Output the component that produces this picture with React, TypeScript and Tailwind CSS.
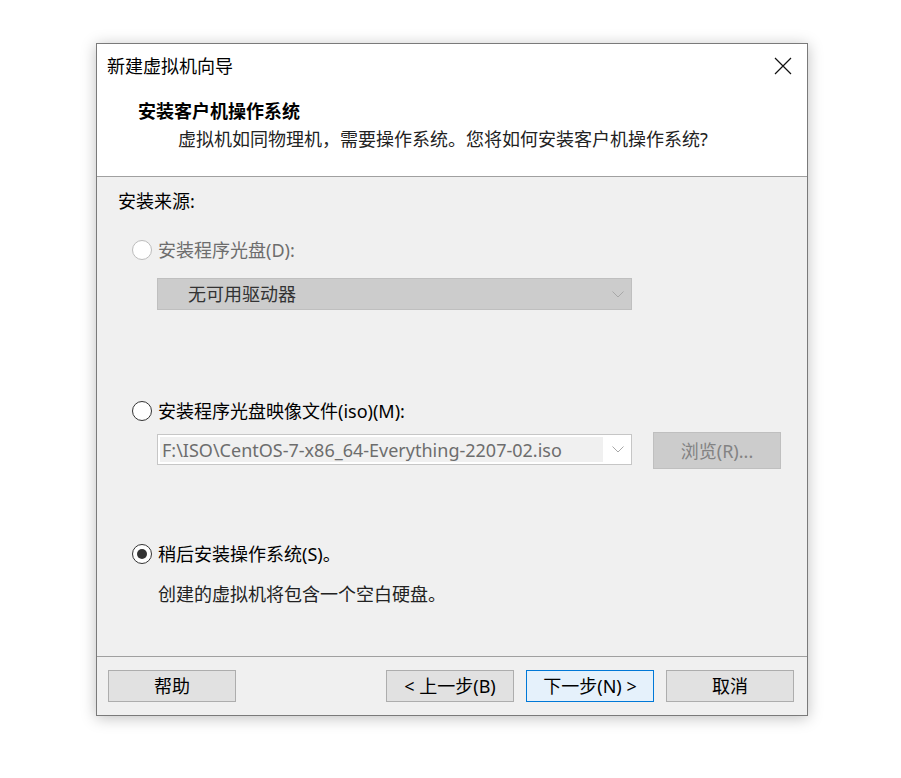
import React from "react";

function Radio({ checked, disabled }: { checked?: boolean; disabled?: boolean }) {
  return (
    <span
      className={`flex h-[20px] w-[20px] shrink-0 items-center justify-center rounded-full border bg-white ${
        disabled ? "border-[#bcbcbc]" : "border-[#333333]"
      }`}
    >
      {checked && <span className="h-[10px] w-[10px] rounded-full bg-[#333333]" />}
    </span>
  );
}

function Chevron({ color }: { color: string }) {
  return (
    <svg width="12" height="7" viewBox="0 0 12 7" fill="none">
      <polyline points="0.5,0.5 6,6 11.5,0.5" stroke={color} strokeWidth="1" />
    </svg>
  );
}

function Button({
  children,
  primary,
  className = "",
}: {
  children: React.ReactNode;
  primary?: boolean;
  className?: string;
}) {
  return (
    <button
      type="button"
      className={`flex h-[32px] w-[128px] items-center justify-center border text-[18px] text-black ${
        primary ? "border-[#0078d7] bg-[#e5f1fb]" : "border-[#adadad] bg-[#e1e1e1]"
      } ${className}`}
    >
      {children}
    </button>
  );
}

export default function App() {
  return (
    <div className="h-[778px] w-[901px] bg-white pl-[96px] pt-[43px] font-['Noto_Sans','Noto_Sans_CJK_SC',sans-serif] leading-[24px] text-black">
      <div className="flex h-[673px] w-[712px] flex-col border border-[#7a7a7a] bg-[#f0f0f0] shadow-[0_2px_14px_rgba(0,0,0,0.25)]">
        {/* header */}
        <div className="h-[133px] shrink-0 border-b border-[#a0a0a0] bg-white">
          <div className="flex h-[44px] items-center justify-between pl-[10px] pr-[15px]">
            <span className="text-[18px]">新建虚拟机向导</span>
            <svg width="18" height="18" viewBox="0 0 18 18" fill="none">
              <path d="M1 1 L17 17 M17 1 L1 17" stroke="#111" strokeWidth="1.2" />
            </svg>
          </div>
          <div className="mt-[11px] pl-[41px] text-[18px] font-bold">安装客户机操作系统</div>
          <div className="mt-[4px] pl-[81px] text-[18px] text-[#222]">
            虚拟机如同物理机，需要操作系统。您将如何安装客户机操作系统?
          </div>
        </div>

        {/* body */}
        <div className="flex flex-1 flex-col pl-[21px] text-[18px]">
          <div className="mt-[12px]">安装来源:</div>

          <div className="mt-[25px] flex items-center gap-[6px] pl-[14px] text-[#6d6d6d]">
            <Radio disabled />
            <span>安装程序光盘(D):</span>
          </div>
          <div className="ml-[39px] mt-[16px] flex h-[32px] w-[475px] items-center justify-between border border-[#bfbfbf] bg-[#cccccc] pl-[30px] pr-[7px] text-[#333]">
            <span>无可用驱动器</span>
            <Chevron color="#a8a8a8" />
          </div>

          <div className="mt-[89px] flex items-center gap-[6px] pl-[14px]">
            <Radio />
            <span>安装程序光盘映像文件(iso)(M):</span>
          </div>
          <div className="mt-[9px] flex items-start gap-[21px] pl-[39px]">
            <div className="mt-[2px] flex h-[31px] w-[475px] items-center border border-[#c6c6c6] bg-white pl-[2px] pr-[7px]">
              <div className="flex h-[25px] w-[443px] items-center bg-[#f0f0f0] pl-[2px] text-[#6d6d6d]">
                F:\ISO\CentOS-7-x86_64-Everything-2207-02.iso
              </div>
              <div className="ml-auto">
                <Chevron color="#a8a8a8" />
              </div>
            </div>
            <div className="flex h-[37px] w-[128px] items-center justify-center border border-[#bfbfbf] bg-[#cccccc] text-[#838383]">
              浏览(R)...
            </div>
          </div>

          <div className="mt-[73px] flex items-center gap-[6px] pl-[14px]">
            <Radio checked />
            <span>稍后安装操作系统(S)。</span>
          </div>
          <div className="mt-[16px] pl-[40px] text-[#222]">创建的虚拟机将包含一个空白硬盘。</div>
        </div>

        {/* footer */}
        <div className="flex h-[59px] shrink-0 items-start border-t border-[#a0a0a0] pl-[11px] pt-[13px]">
          <Button>帮助</Button>
          <Button className="ml-[150px]">&lt; 上一步(B)</Button>
          <Button primary className="ml-[12px]">下一步(N) &gt;</Button>
          <Button className="ml-[12px]">取消</Button>
        </div>
      </div>
    </div>
  );
}
